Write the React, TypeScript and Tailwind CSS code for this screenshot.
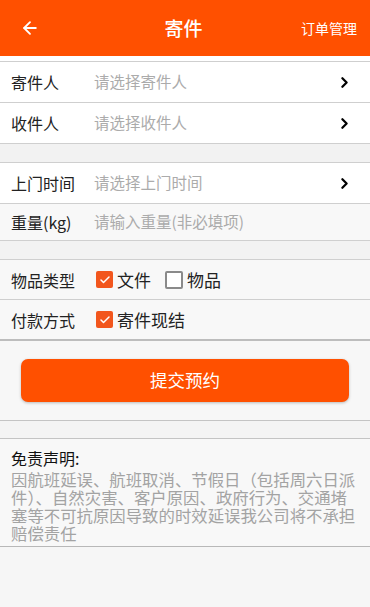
import { ArrowLeft, ChevronRight, Check } from "lucide-react";

const font = { fontFamily: '"Noto Sans CJK SC", "Noto Sans", sans-serif' };

const SelectRow = ({ label, placeholder, arrow = true, bg = "bg-white", h = "h-[41px]" }: { label: string; placeholder: string; arrow?: boolean; bg?: string; h?: string }) => (
  <div className={`flex items-center ${h} ${bg} pl-[11px] pr-[17px] border-b border-[#cfcfcf]`}>
    <span className="w-[83px] text-[16px] text-[#222]">{label}</span>
    <span className="flex-1 text-[15.5px] text-[#ababab]">{placeholder}</span>
    {arrow && <ChevronRight className="w-[17px] h-[17px] text-black" strokeWidth={3.2} />}
  </div>
);

const Box = ({ checked }: { checked: boolean }) =>
  checked ? (
    <span className="flex items-center justify-center w-[17px] h-[17px] rounded-[2px] bg-[#f2561d]">
      <Check className="w-[12px] h-[12px] text-white" strokeWidth={3} />
    </span>
  ) : (
    <span className="w-[18px] h-[18px] rounded-[2px] border-2 border-[#8a8a8a] bg-white" />
  );

const CheckRow = ({ label, items, h = "h-[40px]", border = "border-b border-[#cfcfcf]" }: { label: string; items: { text: string; checked: boolean }[]; h?: string; border?: string }) => (
  <div className={`flex items-center ${h} pl-[11px] ${border}`}>
    <span className="w-[85px] text-[16px] text-[#222]">{label}</span>
    <div className="flex items-center gap-[14px]">
      {items.map((it) => (
        <label key={it.text} className="flex items-center gap-[4px]">
          <Box checked={it.checked} />
          <span className="text-[17px] text-[#222]">{it.text}</span>
        </label>
      ))}
    </div>
  </div>
);

export default function App() {
  return (
    <div className="w-[370px] h-[607px] overflow-hidden bg-[#f6f6f6]" style={font}>
      {/* Header */}
      <div className="flex items-center h-[56px] bg-[#ff5000] px-[20px] text-white">
        <ArrowLeft className="w-[20px] h-[20px]" strokeWidth={2.2} />
        <div className="flex-1 text-center text-[19px] font-medium pl-[26px]">寄件</div>
        <span className="text-[14px] -mr-[7px]">订单管理</span>
      </div>
      <div className="h-[6px] bg-white border-b border-[#cfcfcf]" />

      <SelectRow label="寄件人" placeholder="请选择寄件人" />
      <SelectRow label="收件人" placeholder="请选择收件人" />
      <div className="h-[19px] bg-[#f2f2f2] border-b border-[#cfcfcf]" />

      <SelectRow label="上门时间" placeholder="请选择上门时间" />
      <SelectRow label="重量(kg)" placeholder="请输入重量(非必填项)" arrow={false} bg="bg-[#f8f8f8]" h="h-[37px]" />
      <div className="h-[19px] bg-[#f2f2f2] border-b border-[#cfcfcf]" />

      <div className="bg-[#f8f8f8]">
        <CheckRow
          label="物品类型"
          items={[
            { text: "文件", checked: true },
            { text: "物品", checked: false },
          ]}
        />
        <CheckRow label="付款方式" items={[{ text: "寄件现结", checked: true }]} h="h-[41px]" border="border-b-2 border-[#bdbdbd]" />
      </div>

      <div className="px-[21px] pt-[18px] pb-[18px] bg-[#f7f7f7] border-b border-[#c4c4c4]">
        <button className="w-full h-[43px] rounded-[7px] bg-[#ff5000] text-white text-[17.5px] shadow-[0_1px_3px_rgba(0,0,0,0.25)]">
          提交预约
        </button>
      </div>
      <div className="h-[18px] bg-[#f4f4f4] border-b border-[#c4c4c4]" />

      <div className="pl-[11px] pr-[9px] pt-[8px] pb-[4px] bg-[#f8f8f8] border-b border-[#b8b8b8]">
        <div className="text-[16px] leading-[23px] text-[#111]">免责声明:</div>
        <p className="text-[16.4px] leading-[18px] text-[#a3a3a3]">
          因航班延误、航班取消、节假日（包括周六日派件）、自然灾害、客户原因、政府行为、交通堵塞等不可抗原因导致的时效延误我公司将不承担赔偿责任
        </p>
      </div>
    </div>
  );
}
